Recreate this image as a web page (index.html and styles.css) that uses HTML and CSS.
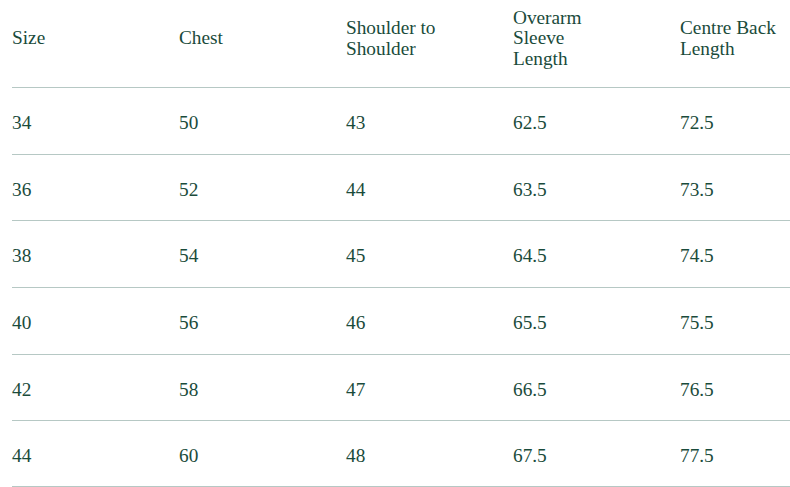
FILE: index.html
```html
<!DOCTYPE html>
<html>
<head>
<meta charset="utf-8">
<link rel="stylesheet" href="styles.css">
</head>
<body>
<div class="wrap">
<table class="sizes">
<thead>
<tr><th>Size</th><th>Chest</th><th>Shoulder to<br>Shoulder</th><th>Overarm<br>Sleeve<br>Length</th><th>Centre Back<br>Length</th></tr>
</thead>
<tbody>
<tr><td>34</td><td>50</td><td>43</td><td>62.5</td><td>72.5</td></tr>
<tr class="short"><td>36</td><td>52</td><td>44</td><td>63.5</td><td>73.5</td></tr>
<tr><td>38</td><td>54</td><td>45</td><td>64.5</td><td>74.5</td></tr>
<tr><td>40</td><td>56</td><td>46</td><td>65.5</td><td>75.5</td></tr>
<tr class="short"><td>42</td><td>58</td><td>47</td><td>66.5</td><td>76.5</td></tr>
<tr class="short"><td>44</td><td>60</td><td>48</td><td>67.5</td><td>77.5</td></tr>
</tbody>
</table>
</div>
</body>
</html>
```
FILE: styles.css
```css
html, body { margin: 0; padding: 0; background: #fff; }
.wrap { padding-left: 12px; overflow: hidden; width: 778px; }
.sizes {
  border-collapse: collapse;
  table-layout: fixed;
  width: 835px;
  font-family: "Liberation Serif", serif;
  font-size: 19.3px;
  color: #1a4b3b;
}
.sizes th, .sizes td {
  width: 167px;
  text-align: left;
  vertical-align: middle;
  font-weight: normal;
  line-height: 20.5px;
  border-bottom: 1px solid #b6c8c4;
}
.sizes th { height: 77px; padding: 0 0 10px 0; }
.sizes td { height: 61px; padding: 5px 0 0 0; }
.sizes tbody tr.short td { height: 60px; }
```
